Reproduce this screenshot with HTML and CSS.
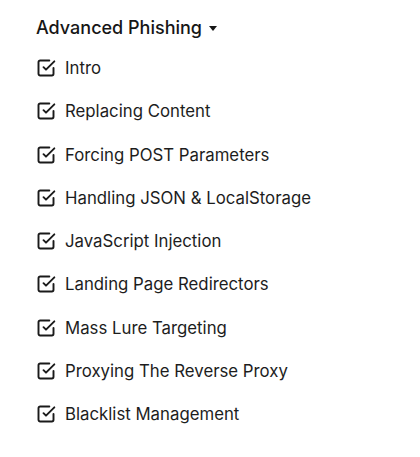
FILE: index.html
```html
<!DOCTYPE html>
<html>
<head>
<meta charset="utf-8">
<link rel="stylesheet" href="styles.css">
</head>
<body>
<div class="section">
  <div class="heading">Advanced Phishing <span class="caret"></span></div>
  <ul class="list">
    <li class="item"><svg class="icon" viewBox="0 0 24 24"><path d="m9 11 3 3L22 4"/><path d="M21 12v7a2 2 0 0 1-2 2H5a2 2 0 0 1-2-2V5a2 2 0 0 1 2-2h11"/></svg><span>Intro</span></li>
    <li class="item"><svg class="icon" viewBox="0 0 24 24"><path d="m9 11 3 3L22 4"/><path d="M21 12v7a2 2 0 0 1-2 2H5a2 2 0 0 1-2-2V5a2 2 0 0 1 2-2h11"/></svg><span>Replacing Content</span></li>
    <li class="item"><svg class="icon" viewBox="0 0 24 24"><path d="m9 11 3 3L22 4"/><path d="M21 12v7a2 2 0 0 1-2 2H5a2 2 0 0 1-2-2V5a2 2 0 0 1 2-2h11"/></svg><span>Forcing POST Parameters</span></li>
    <li class="item"><svg class="icon" viewBox="0 0 24 24"><path d="m9 11 3 3L22 4"/><path d="M21 12v7a2 2 0 0 1-2 2H5a2 2 0 0 1-2-2V5a2 2 0 0 1 2-2h11"/></svg><span>Handling JSON &amp; LocalStorage</span></li>
    <li class="item"><svg class="icon" viewBox="0 0 24 24"><path d="m9 11 3 3L22 4"/><path d="M21 12v7a2 2 0 0 1-2 2H5a2 2 0 0 1-2-2V5a2 2 0 0 1 2-2h11"/></svg><span>JavaScript Injection</span></li>
    <li class="item"><svg class="icon" viewBox="0 0 24 24"><path d="m9 11 3 3L22 4"/><path d="M21 12v7a2 2 0 0 1-2 2H5a2 2 0 0 1-2-2V5a2 2 0 0 1 2-2h11"/></svg><span>Landing Page Redirectors</span></li>
    <li class="item"><svg class="icon" viewBox="0 0 24 24"><path d="m9 11 3 3L22 4"/><path d="M21 12v7a2 2 0 0 1-2 2H5a2 2 0 0 1-2-2V5a2 2 0 0 1 2-2h11"/></svg><span>Mass Lure Targeting</span></li>
    <li class="item"><svg class="icon" viewBox="0 0 24 24"><path d="m9 11 3 3L22 4"/><path d="M21 12v7a2 2 0 0 1-2 2H5a2 2 0 0 1-2-2V5a2 2 0 0 1 2-2h11"/></svg><span>Proxying The Reverse Proxy</span></li>
    <li class="item"><svg class="icon" viewBox="0 0 24 24"><path d="m9 11 3 3L22 4"/><path d="M21 12v7a2 2 0 0 1-2 2H5a2 2 0 0 1-2-2V5a2 2 0 0 1 2-2h11"/></svg><span>Blacklist Management</span></li>
  </ul>
</div>
</body>
</html>
```
FILE: styles.css
```css
html, body {
  margin: 0;
  padding: 0;
  background: #ffffff;
}
body {
  font-family: Inter, "Noto Sans", sans-serif;
  color: #1a1a1a;
}
.section {
  padding: 16px 0 0 36px;
}
.heading {
  display: flex;
  align-items: center;
  gap: 4px;
  font-size: 18px;
  font-weight: 500;
  line-height: 24px;
  color: #161616;
}
.caret {
  width: 0;
  height: 0;
  border-left: 4.5px solid transparent;
  border-right: 4.5px solid transparent;
  border-top: 5px solid #161616;
  margin-left: 3px;
}
.list {
  list-style: none;
  margin: 16px 0 0 0;
  padding: 0;
  display: flex;
  flex-direction: column;
  gap: 19.25px;
}
.item {
  display: flex;
  align-items: center;
  gap: 9px;
  font-size: 16.8px;
  line-height: 24px;
  color: #1d1d1d;
}
.icon {
  width: 20px;
  height: 20px;
  fill: none;
  stroke: #1a1a1a;
  stroke-width: 2.3;
  stroke-linecap: round;
  stroke-linejoin: round;
  flex: none;
}
```
